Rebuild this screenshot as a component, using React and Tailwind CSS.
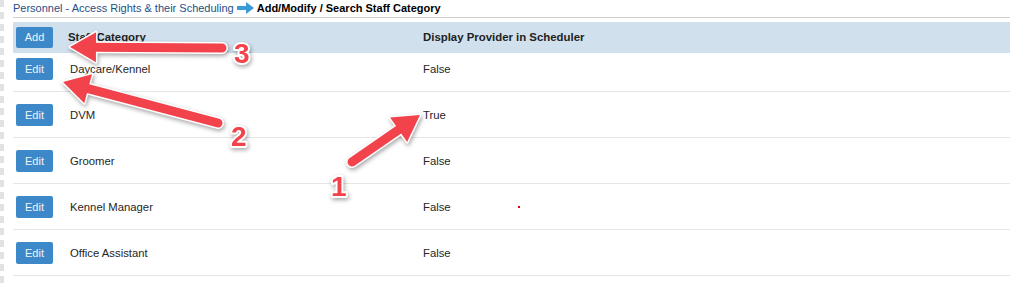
import React from "react";

const rows = [
  { name: "Daycare/Kennel", show: "False" },
  { name: "DVM", show: "True" },
  { name: "Groomer", show: "False" },
  { name: "Kennel Manager", show: "False" },
  { name: "Office Assistant", show: "False" },
];

// callout arrows drawn over the table
const arrows = [
  { tail: [222, 48], tip: [70, 47], label: "3", lx: 234, ly: 63 },
  { tail: [218, 123], tip: [63, 82], label: "2", lx: 231, ly: 146 },
  { tail: [352, 162], tip: [420, 115], label: "1", lx: 331, ly: 196 },
];

const arrowParts = ({ tail, tip }) => {
  const dx = tip[0] - tail[0];
  const dy = tip[1] - tail[1];
  const len = Math.hypot(dx, dy);
  const ux = dx / len;
  const uy = dy / len;
  const nx = -uy;
  const ny = ux;
  const L = 26;
  const H = 15;
  const bx = tip[0] - ux * L;
  const by = tip[1] - uy * L;
  const head = [
    [tip[0], tip[1]],
    [bx + nx * H, by + ny * H],
    [bx - nx * H, by - ny * H],
  ]
    .map((p) => p.join(","))
    .join(" ");
  return { head, bx: bx + ux * 4, by: by + uy * 4 };
};

const Callouts = () => (
  <svg
    className="absolute left-0 top-0 pointer-events-none [filter:drop-shadow(1px_2px_2px_rgba(0,0,0,0.35))]"
    width="1010"
    height="285"
  >
    {arrows.map((a, i) => {
      const { head, bx, by } = arrowParts(a);
      return (
        <g key={i}>
          <line x1={a.tail[0]} y1={a.tail[1]} x2={bx} y2={by} stroke="#fff" strokeWidth="12" strokeLinecap="round" />
          <polygon points={head} fill="#fff" stroke="#fff" strokeWidth="3" strokeLinejoin="round" />
          <line x1={a.tail[0]} y1={a.tail[1]} x2={bx} y2={by} stroke="#f2424b" strokeWidth="9" strokeLinecap="round" />
          <polygon points={head} fill="#f2424b" />
          <text
            x={a.lx}
            y={a.ly}
            fill="#f2424b"
            stroke="#fff"
            strokeWidth="4"
            strokeLinejoin="round"
            paintOrder="stroke"
            fontFamily="Liberation Sans, Arial, sans-serif"
            fontWeight="700"
            fontSize="28"
          >
            {a.label}
          </text>
        </g>
      );
    })}
  </svg>
);

export default function App() {
  return (
    <div className="relative w-[1010px] h-[285px] overflow-hidden bg-white flex font-['Liberation_Sans',Arial,sans-serif]">
      <div className="w-[4px] h-full bg-[repeating-linear-gradient(to_bottom,#e2e2e2_0px,#e2e2e2_7px,transparent_7px,transparent_12px)]" />
      <div className="flex-1 pl-[9px]">
        <div className="h-[18px] flex items-center gap-[3px] border-b border-[#cfcfcf] text-[11px] leading-none pb-px">
          <span className="text-[#1d4f86]">Personnel - Access Rights &amp; their Scheduling</span>
          <svg width="17" height="12" viewBox="0 0 17 12">
            <path d="M0 4h9V0l8 6-8 6V8H0z" fill="#3b9ad8" />
          </svg>
          <span className="font-bold text-black">Add/Modify / Search Staff Category</span>
        </div>

        <div className="mt-[4px] h-[31px] bg-[#d0e0ec] flex items-center text-[11.4px] font-bold text-[#222]">
          <div className="w-[55px] pl-[3px]">
            <button className="w-[37px] h-[21px] rounded-[2px] bg-[#3d88c8] text-[#eef4fa] text-[11px] font-normal">
              Add
            </button>
          </div>
          <div className="w-[355px]">Staff Category</div>
          <div>Display Provider in Scheduler</div>
        </div>

        {rows.map((r, i) => (
          <div
            key={r.name}
            className={`flex items-start border-b border-[#e6e6e6] text-[11.3px] text-[#262626] ${
              i === 0 ? "h-[39px] pt-[5px]" : "h-[46px] pt-[12px]"
            }`}
          >
            <div className="w-[55px] pl-[3px]">
              <button className="w-[37px] h-[22px] rounded-[2px] bg-[#3d88c8] text-[#eef4fa] text-[11px]">
                Edit
              </button>
            </div>
            <div className="w-[355px] h-[22px] flex items-center pl-[2px]">{r.name}</div>
            <div className="h-[22px] flex items-center">{r.show}</div>
            {r.name === "Kennel Manager" && (
              <span className="ml-[67px] mt-[10px] w-[2px] h-[2px] bg-red-600" />
            )}
          </div>
        ))}
      </div>
      <Callouts />
    </div>
  );
}
